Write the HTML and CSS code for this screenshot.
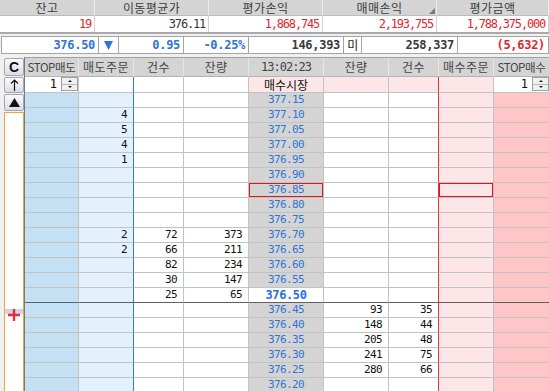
FILE: index.html
```html
<!DOCTYPE html>
<html lang="ko">
<head>
<meta charset="utf-8">
<title>호가</title>
<link rel="stylesheet" href="styles.css">
</head>
<body>
<div class="summary">
  <div class="sh">잔고</div>
  <div class="sh">이동평균가</div>
  <div class="sh">평가손익</div>
  <div class="sh">매매손익<span class="grip"></span></div>
  <div class="sh">평가금액</div>
  <div class="sv red">19</div>
  <div class="sv">376.11</div>
  <div class="sv red">1,868,745</div>
  <div class="sv red">2,193,755</div>
  <div class="sv red">1,788,375,000</div>
</div>

<div class="quote">
  <div class="q blue">376.50</div>
  <div class="q qi"><svg width="9" height="9" viewBox="0 0 9 9"><polygon points="0,0 9,0 4.5,9" fill="#2f74d6"/></svg></div>
  <div class="q blue">0.95</div>
  <div class="q blue">-0.25%</div>
  <div class="q">146,393</div>
  <div class="q qk">미</div>
  <div class="q">258,337</div>
  <div class="q red">(5,632)</div>
</div>

<div class="board">
  <div class="side">
    <div class="btn btn-c">C</div>
    <div class="btn btn-up"><svg width="9" height="12" viewBox="0 0 9 12"><path d="M4.5 1 V12 M1 4.5 L4.5 1 L8 4.5" fill="none" stroke="#111" stroke-width="1.2"/></svg></div>
    <div class="btn btn-tri"><svg width="11" height="9" viewBox="0 0 11 9"><polygon points="5.5,0 11,9 0,9" fill="#111"/></svg></div>
    <div class="marker">
      <div class="plus"><svg width="12" height="12" viewBox="0 0 12 12"><path d="M6 0 V12 M0 6 H12" stroke="#e0303a" stroke-width="2.4"/></svg></div>
    </div>
  </div>

  <div class="book">
    <div class="row hdr">
      <div class="st">STOP매도</div><div>매도주문</div><div>건수</div><div>잔량</div><div class="mono">13:02:23</div><div>잔량</div><div>건수</div><div>매수주문</div><div class="st">STOP매수</div>
    </div>
    <div class="row r1">
      <div class="stop"><span class="qty">1</span><span class="spin"><i class="up"></i><i class="dn"></i></span></div><div></div><div></div><div></div><div class="mkt">매수시장</div><div></div><div></div><div></div><div class="stop"><span class="qty">1</span><span class="spin"><i class="up"></i><i class="dn"></i></span></div>
    </div>
    <div class="row"><div></div><div></div><div></div><div></div><div class="p">377.15</div><div></div><div></div><div></div><div></div></div>
    <div class="row"><div></div><div>4</div><div></div><div></div><div class="p">377.10</div><div></div><div></div><div></div><div></div></div>
    <div class="row"><div></div><div>5</div><div></div><div></div><div class="p">377.05</div><div></div><div></div><div></div><div></div></div>
    <div class="row"><div></div><div>4</div><div></div><div></div><div class="p">377.00</div><div></div><div></div><div></div><div></div></div>
    <div class="row"><div></div><div>1</div><div></div><div></div><div class="p">376.95</div><div></div><div></div><div></div><div></div></div>
    <div class="row"><div></div><div></div><div></div><div></div><div class="p">376.90</div><div></div><div></div><div></div><div></div></div>
    <div class="row"><div></div><div></div><div></div><div></div><div class="p sel">376.85</div><div></div><div></div><div class="sel"></div><div></div></div>
    <div class="row"><div></div><div></div><div></div><div></div><div class="p">376.80</div><div></div><div></div><div></div><div></div></div>
    <div class="row"><div></div><div></div><div></div><div></div><div class="p">376.75</div><div></div><div></div><div></div><div></div></div>
    <div class="row"><div></div><div>2</div><div>72</div><div>373</div><div class="p">376.70</div><div></div><div></div><div></div><div></div></div>
    <div class="row"><div></div><div>2</div><div>66</div><div>211</div><div class="p">376.65</div><div></div><div></div><div></div><div></div></div>
    <div class="row"><div></div><div></div><div>82</div><div>234</div><div class="p">376.60</div><div></div><div></div><div></div><div></div></div>
    <div class="row"><div></div><div></div><div>30</div><div>147</div><div class="p">376.55</div><div></div><div></div><div></div><div></div></div>
    <div class="row cur"><div></div><div></div><div>25</div><div>65</div><div class="p">376.50</div><div></div><div></div><div></div><div></div></div>
    <div class="row"><div></div><div></div><div></div><div></div><div class="p">376.45</div><div>93</div><div>35</div><div></div><div></div></div>
    <div class="row"><div></div><div></div><div></div><div></div><div class="p">376.40</div><div>148</div><div>44</div><div></div><div></div></div>
    <div class="row"><div></div><div></div><div></div><div></div><div class="p">376.35</div><div>205</div><div>48</div><div></div><div></div></div>
    <div class="row"><div></div><div></div><div></div><div></div><div class="p">376.30</div><div>241</div><div>75</div><div></div><div></div></div>
    <div class="row"><div></div><div></div><div></div><div></div><div class="p">376.25</div><div>280</div><div>66</div><div></div><div></div></div>
    <div class="row"><div></div><div></div><div></div><div></div><div class="p">376.20</div><div></div><div></div><div></div><div></div></div>
  </div>
</div>
</body>
</html>
```
FILE: styles.css
```css
* { box-sizing: border-box; margin: 0; padding: 0; }
html, body { width: 549px; height: 391px; overflow: hidden; }
body {
  background: #f0f0f0;
  font-family: "DejaVu Sans Mono", "Noto Sans CJK KR", monospace;
  color: #222;
}

/* summary table */
.summary {
  display: grid;
  grid-template-columns: 95px 114px 114px 114px 112px;
  background: #fff;
  border-bottom: 2px solid #a9a9a9;
}
.sh {
  position: relative;
  height: 16px;
  background: #d4d4d4;
  border-right: 1px solid #ececec;
  border-bottom: 1px solid #bcbcbc;
  font: 12px/15px "Noto Sans CJK KR", sans-serif;
  color: #3c3c3c;
  text-align: center;
  letter-spacing: 0.4px;
}
.grip {
  position: absolute;
  right: 1px;
  bottom: 1px;
  width: 0;
  height: 0;
  border-left: 6px solid transparent;
  border-bottom: 6px solid #7a7a7a;
}
.sv {
  height: 16px;
  border-right: 1px solid #d2d2d2;
  text-align: right;
  padding-right: 3px;
  font: 12px/16px "DejaVu Sans Mono", monospace;
  letter-spacing: -1.2px;
  color: #333;
}
.red { color: #e3262e !important; }
.blue { color: #2f74d6 !important; }

/* quote bar */
.quote {
  display: grid;
  grid-template-columns: 97px 20px 65px 65px 95px 18px 96px 90px;
  margin: 2px 0 0 1px;
  height: 18px;
  background: #fff;
  border: 1px solid #a4a4a4;
}
.q {
  border-right: 1px solid #a4a4a4;
  text-align: right;
  padding-right: 3px;
  font: bold 12px/16px "DejaVu Sans Mono", monospace;
  letter-spacing: -0.3px;
  color: #3a3a3a;
}
.q:last-child { border-right: 0; }
.qi { display: flex; align-items: center; justify-content: center; padding: 0; }
.qk {
  text-align: center;
  padding: 0;
  font: 12px/16px "Noto Sans CJK KR", sans-serif;
  color: #222;
}

/* board */
.board { display: flex; margin-top: 3px; }
.side {
  width: 24px;
  flex: none;
  display: flex;
  flex-direction: column;
  gap: 1px;
  padding: 1px 0 0 4px;
}
.btn {
  display: flex;
  align-items: center;
  justify-content: center;
  border: 1px solid #a8a4b8;
  border-radius: 2px;
  background: linear-gradient(#fbfbfd, #dcdce6);
}
.btn-c { height: 18px; font: bold 14px/1 "Liberation Sans", sans-serif; color: #111; }
.btn-up { height: 16px; }
.btn-tri { height: 17px; }
.marker {
  position: relative;
  flex: 1;
  border: 1px solid #f2a536;
  background: #fff;
}
.plus {
  position: absolute;
  top: 196px;
  left: 0;
  width: 18px;
  height: 12px;
  display: flex;
  justify-content: center;
  background: linear-gradient(#d6cfea 0, #d6cfea 5px, transparent 5px);
}

.book {
  width: 525px;
  flex: none;
  border-left: 1px solid #7a7a7a;
  border-top: 1px solid #a0a0a0;
}
.row {
  display: grid;
  grid-template-columns: 54px 55px 50px 65px 75px 65px 50px 55px 55px;
  height: 15px;
}
.row > div {
  border-right: 1px solid #c2c2c2;
  border-bottom: 1px solid #c2c2c2;
  text-align: right;
  padding-right: 6px;
  font: 11px/14px "DejaVu Sans Mono", monospace;
  letter-spacing: -0.6px;
  color: #111;
  background: #fff;
}
.row > div:last-child { border-right: 0; }
.row > :nth-child(1) { background: #c4e0f2; }
.row > :nth-child(2) { background: #e4f0fb; border-right-color: #2c7be0; }
.row > :nth-child(7) { border-right-color: #e0343c; }
.row > :nth-child(8) { background: #fce6e8; }
.row > :nth-child(9) { background: #ffc6c8; }
.row > .p {
  background: #d4d4d4;
  text-align: center;
  padding: 0;
  letter-spacing: -0.6px;
  color: #2f74d6;
}
.row > .sel { box-shadow: inset 0 0 0 1px #e8101a; }

.hdr { height: 19px; }
.hdr > div,
.hdr > div:nth-child(n) {
  background: #d4d4d4;
  border-right-color: #e6e6e6;
  border-bottom-color: #b4b4b4;
  text-align: center;
  padding: 0;
  white-space: nowrap;
  overflow: hidden;
  font: 12px/18px "Noto Sans CJK KR", sans-serif;
  letter-spacing: 0.5px;
  color: #444;
}
.hdr > .st,
.hdr > .st:nth-child(n) {
  font-size: 11.5px;
  letter-spacing: -0.4px;
}
.hdr > .mono,
.hdr > .mono:nth-child(n) {
  font: 12px/18px "DejaVu Sans Mono", monospace;
  letter-spacing: -1px;
}

.r1 { height: 16px; }
.r1 > div:nth-child(-n+4) { background: #fff; }
.r1 > div:nth-child(n+6) { background: #fce6e8; }
.r1 > .stop,
.r1 > .stop:nth-child(n) {
  display: flex;
  justify-content: flex-end;
  align-items: center;
  gap: 4px;
  padding: 0 0 1px 0;
  background: #fff;
  letter-spacing: 0;
}
.qty {
  font: 12px/14px "DejaVu Sans Mono", monospace;
  letter-spacing: 0;
}
.r1 > .mkt {
  background: #fce6e8;
  text-align: center;
  padding: 0;
  font: 12px/15px "Noto Sans CJK KR", sans-serif;
  letter-spacing: 0;
  color: #111;
}
.spin {
  display: flex;
  flex: none;
  flex-direction: column;
  width: 17px;
  height: 14px;
  border: 1px solid #a0a0a0;
  background: #f0f0f0;
}
.spin i {
  flex: 1;
  display: flex;
  align-items: center;
  justify-content: center;
}
.spin .up { border-bottom: 1px solid #b8b8b8; }
.spin .up::after,
.spin .dn::after {
  content: "";
  width: 0;
  height: 0;
  border-left: 2px solid transparent;
  border-right: 2px solid transparent;
}
.spin .up::after { border-bottom: 2px solid #222; }
.spin .dn::after { border-top: 2px solid #222; }

.cur > div { border-bottom-color: #606060; }
.cur > .p {
  background: #fff;
  font: bold 12px/14px "DejaVu Sans Mono", monospace;
  letter-spacing: -0.4px;
  color: #2a70e0;
}
```
